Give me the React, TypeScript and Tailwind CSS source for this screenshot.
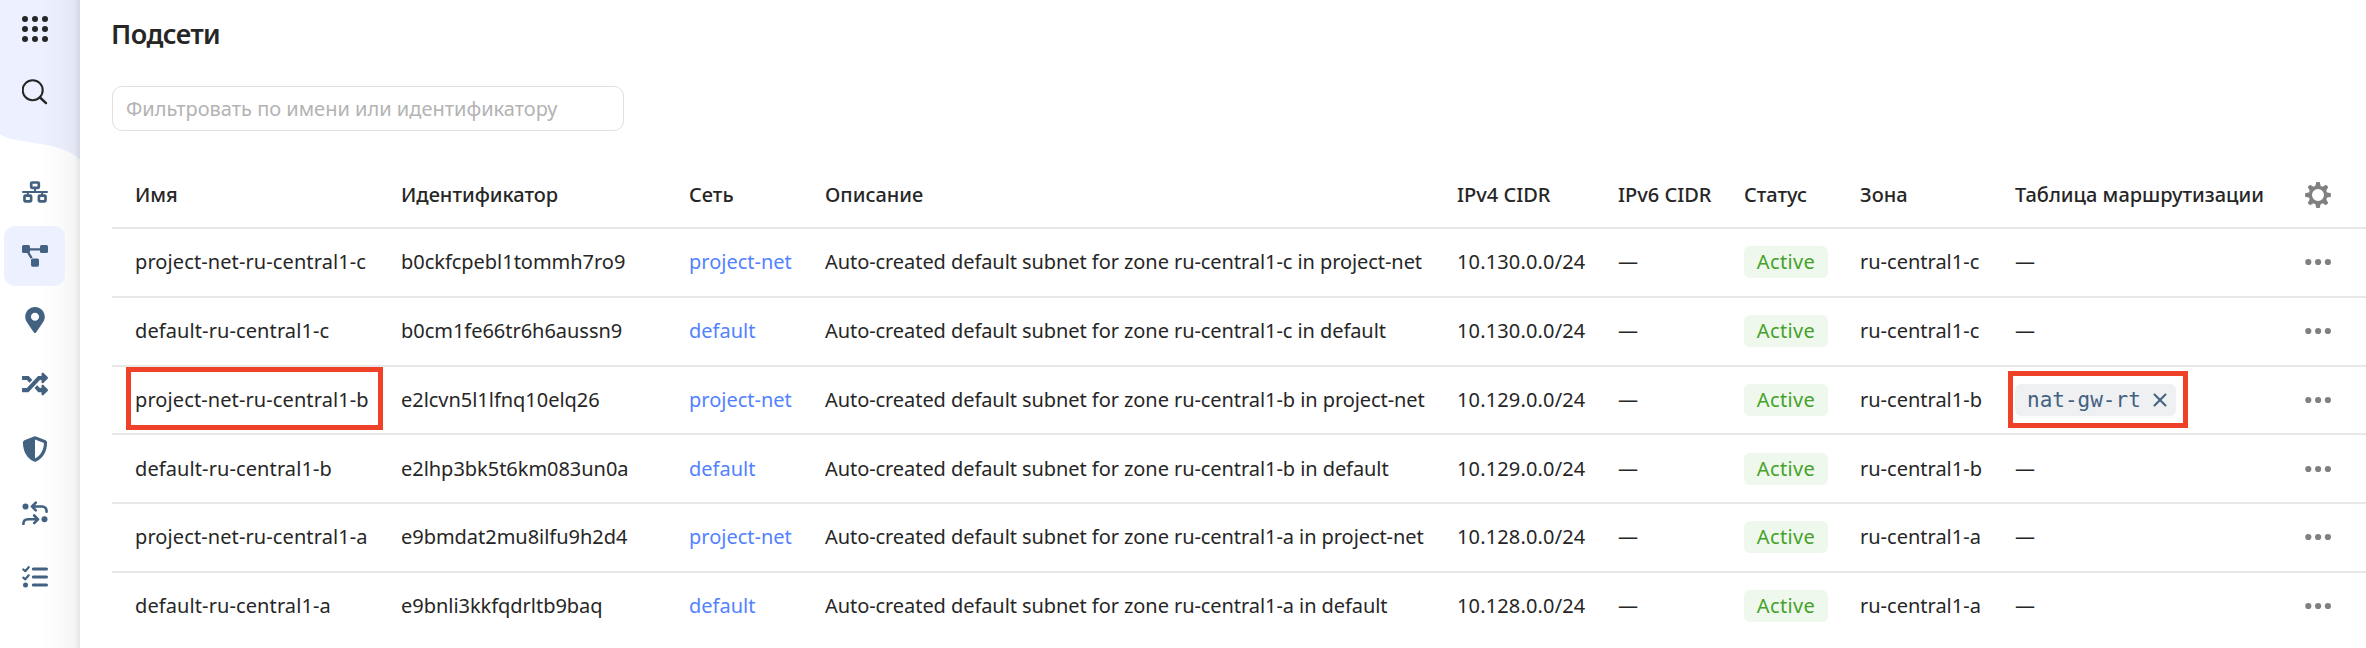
import type { ReactNode } from 'react';
import { FaMapMarkerAlt, FaRandom } from 'react-icons/fa';

type Subnet = {
  name: string;
  id: string;
  net: string;
  cidr: string;
  zone: string;
  routeTable?: string;
  marked?: boolean;
};

const SUBNETS: Subnet[] = [
  { name: 'project-net-ru-central1-c', id: 'b0ckfcpebl1tommh7ro9', net: 'project-net', cidr: '10.130.0.0/24', zone: 'ru-central1-c' },
  { name: 'default-ru-central1-c', id: 'b0cm1fe66tr6h6aussn9', net: 'default', cidr: '10.130.0.0/24', zone: 'ru-central1-c' },
  { name: 'project-net-ru-central1-b', id: 'e2lcvn5l1lfnq10elq26', net: 'project-net', cidr: '10.129.0.0/24', zone: 'ru-central1-b', routeTable: 'nat-gw-rt', marked: true },
  { name: 'default-ru-central1-b', id: 'e2lhp3bk5t6km083un0a', net: 'default', cidr: '10.129.0.0/24', zone: 'ru-central1-b' },
  { name: 'project-net-ru-central1-a', id: 'e9bmdat2mu8ilfu9h2d4', net: 'project-net', cidr: '10.128.0.0/24', zone: 'ru-central1-a' },
  { name: 'default-ru-central1-a', id: 'e9bnli3kkfqdrltb9baq', net: 'default', cidr: '10.128.0.0/24', zone: 'ru-central1-a' },
];

const HEADERS = ['Имя', 'Идентификатор', 'Сеть', 'Описание', 'IPv4 CIDR', 'IPv6 CIDR', 'Статус', 'Зона', 'Таблица маршрутизации'];

const COLUMNS = 'grid grid-cols-[266px_288px_136px_632px_161px_126px_116px_288px_1fr] items-center pl-[23px]';

function NavItem({ active, children }: { active?: boolean; children: ReactNode }) {
  return (
    <div className={`flex h-[60px] w-[61px] items-center justify-center rounded-[11px] text-[#436181] ${active ? 'bg-[#edf0fe]' : ''}`}>
      {children}
    </div>
  );
}

function AppsIcon() {
  return (
    <svg width="26" height="26" viewBox="0 0 26 26" fill="#262626">
      {[3, 13, 23].map((y) => [3, 13, 23].map((x) => <circle key={`${x}-${y}`} cx={x} cy={y} r="3" />))}
    </svg>
  );
}

function SearchIcon() {
  return (
    <svg width="26" height="26" viewBox="0 0 26 26" fill="none" stroke="#262626" strokeWidth="2.1" strokeLinecap="round">
      <circle cx="10.7" cy="11.2" r="10" />
      <path d="M18 18.5l6 5.6" strokeWidth="2.4" />
    </svg>
  );
}

function NetworkIcon() {
  return (
    <svg width="26" height="22" viewBox="0 0 26 22" fill="none" stroke="currentColor" strokeWidth="2.7">
      <rect x="9.2" y="1.5" width="7.6" height="5.4" rx="0.8" />
      <rect x="2.5" y="14.6" width="6.6" height="5.7" rx="0.8" />
      <rect x="16.9" y="14.6" width="6.6" height="5.7" rx="0.8" />
      <path d="M1 11h24" strokeWidth="2" strokeLinecap="round" />
      <path d="M13 8v3M5.8 11v3M20.2 11v3" strokeWidth="2" />
    </svg>
  );
}

function SubnetIcon() {
  return (
    <svg width="26" height="22" viewBox="0 0 26 22" fill="currentColor">
      <rect width="8" height="8" rx="1.6" />
      <rect x="18" width="8" height="8" rx="1.6" />
      <rect x="9" y="13.4" width="8" height="8.3" rx="1.6" />
      <path d="M8 4.3h10M6.2 7.5l3.4 5.6" fill="none" stroke="currentColor" strokeWidth="2.3" />
    </svg>
  );
}

function ShieldIcon() {
  return (
    <svg width="26" height="26" viewBox="0 0 26 26" fillRule="evenodd" fill="currentColor">
      <path d="M12 .5Q13 0 14 .5L23.6 4.3Q25.1 5 25.1 6.5C25 15.5 21 22.5 14 25.6Q13 26.1 12 25.6C5 22.5 1 15.5.9 6.5Q.9 5 2.4 4.3ZM13 3.5V22.5C18.5 19.8 21.8 14 22 7Z" />
    </svg>
  );
}

function RouteIcon() {
  return (
    <svg width="26" height="24" viewBox="0 0 26 24" fill="none" stroke="currentColor" strokeWidth="2.6" strokeLinecap="round" strokeLinejoin="round">
      <circle cx="3.5" cy="5.5" r="3" fill="currentColor" stroke="none" />
      <path d="M24.6 10.7C24.6 7.4 23 5.5 20 5.5H10M13.8 1.7L10 5.5l3.8 3.8" />
      <circle cx="22.5" cy="18.3" r="3" fill="currentColor" stroke="none" />
      <path d="M1.4 23C1.4 20 3 18.3 6 18.3H16M12.2 14.5l3.8 3.8-3.8 3.8" />
    </svg>
  );
}

function ChecklistIcon() {
  return (
    <svg width="26" height="22" viewBox="0 0 26 22" fill="none" stroke="currentColor" strokeWidth="2.2" strokeLinecap="round" strokeLinejoin="round">
      <path d="M11.3 2.9H24.5M11.3 11H24.5M11.3 19.1H24.5" strokeWidth="3" />
      <path d="M1.3 3.5l2 1.7L6.7 1.2M1.3 11.6l2 1.7L6.7 9.3" />
      <circle cx="3.5" cy="19.1" r="2.5" fill="currentColor" stroke="none" />
    </svg>
  );
}

function GearIcon() {
  return (
    <svg width="26" height="26" viewBox="-13 -13 26 26" fill="none" stroke="#808080">
      <circle r="7.7" strokeWidth="3.4" />
      {[0, 45, 90, 135, 180, 225, 270, 315].map((a) => (
        <path key={a} d="M-2.8-8.5L-1.7-12.9H1.7L2.8-8.5Z" fill="#808080" stroke="none" transform={`rotate(${a})`} />
      ))}
    </svg>
  );
}

function MoreIcon() {
  return (
    <svg width="26" height="8" viewBox="0 0 26 8" fill="#808080">
      <circle cx="3.3" cy="4" r="3.1" />
      <circle cx="13.1" cy="4" r="3.1" />
      <circle cx="22.9" cy="4" r="3.1" />
    </svg>
  );
}

function Sidebar() {
  return (
    <aside className="relative h-full w-[80px] shrink-0 overflow-hidden bg-white">
      <svg className="absolute top-0 left-0" width="80" height="162" viewBox="0 0 80 162">
        <path d="M0 0H80V159.5C70 151 60 147.5 46 145L14 139.5Q5 138 0 134Z" fill="#edf0fe" />
      </svg>
      <div className="absolute inset-y-0 right-0 w-[40px] bg-[linear-gradient(to_right,rgba(0,0,0,0)_0%,rgba(0,0,0,0.02)_55%,rgba(0,0,0,0.04)_85%,rgba(0,0,0,0.1)_100%)]" />
      <div className="relative flex flex-col pl-[22px] pt-[16px]">
        <AppsIcon />
        <div className="mt-[37px]">
          <SearchIcon />
        </div>
      </div>
      <nav className="relative flex flex-col gap-[4.15px] pl-[4px] pt-[57px]">
        <NavItem>
          <NetworkIcon />
        </NavItem>
        <NavItem active>
          <SubnetIcon />
        </NavItem>
        <NavItem>
          <FaMapMarkerAlt size={26} />
        </NavItem>
        <NavItem>
          <FaRandom size={26} />
        </NavItem>
        <NavItem>
          <ShieldIcon />
        </NavItem>
        <NavItem>
          <RouteIcon />
        </NavItem>
        <NavItem>
          <ChecklistIcon />
        </NavItem>
      </nav>
    </aside>
  );
}

function Row({ subnet }: { subnet: Subnet }) {
  return (
    <div className={`${COLUMNS} h-[68.75px] border-b-2 border-[#e8e8e8] last:border-transparent`}>
      <div className="relative tracking-[0.1px]">
        {subnet.name}
        {subnet.marked && <div className="absolute top-[-19px] left-[-9px] h-[63px] w-[257px] border-5 border-[#ee4128]" />}
      </div>
      <div className="tracking-[-0.03px]">{subnet.id}</div>
      <div className="text-[#5282ff]">{subnet.net}</div>
      <div className="tracking-[-0.07px]">
        Auto-created default subnet for zone {subnet.zone} in {subnet.net}
      </div>
      <div className="tracking-[0.15px]">{subnet.cidr}</div>
      <div>—</div>
      <div>
        <span className="flex h-[32px] w-[84px] items-center justify-center rounded-[6px] bg-[#eef8ed] tracking-[0.35px] text-[#46a229]">Active</span>
      </div>
      <div className="flex items-center">
        <div className="w-[155px] shrink-0">{subnet.zone}</div>
        {subnet.routeTable ? (
          <div className="relative flex h-[32px] w-[161px] shrink-0 items-center rounded-[6px] bg-[#eef0f2] pl-[12px] text-[#436181]">
            <span className="font-['DejaVu_Sans_Mono',monospace] text-[21px]">{subnet.routeTable}</span>
            <svg className="ml-[12px]" width="14" height="14" viewBox="0 0 14 14" stroke="currentColor" strokeWidth="2" strokeLinecap="round">
              <path d="M1.5 1.5L12.5 12.5M12.5 1.5L1.5 12.5" />
            </svg>
            <div className="absolute top-[-13px] left-[-7px] h-[57px] w-[180px] border-5 border-[#ee4128]" />
          </div>
        ) : (
          <div>—</div>
        )}
      </div>
      <div className="flex justify-end pr-[35px]">
        <MoreIcon />
      </div>
    </div>
  );
}

export default function App() {
  return (
    <div className="flex h-[648px] w-full overflow-hidden bg-white font-['Noto_Sans',sans-serif] text-[20px] leading-[28px] text-[#262626]">
      <Sidebar />
      <main className="min-w-0 flex-1 pl-[32px] pt-[16px] whitespace-nowrap">
        <h1 className="-ml-px text-[27px] leading-[36px] font-semibold tracking-[-0.55px]">Подсети</h1>
        <div className="mt-[34px] flex h-[45px] w-[512px] items-center rounded-[10px] border border-[#e0e0e0] pl-[13px] text-[#b3b3b3]">
          Фильтровать по имени или идентификатору
        </div>
        <div className={`${COLUMNS} mt-[30px] h-[68px] border-b-2 border-[#e8e8e8] pt-[2px] font-medium`}>
          {HEADERS.slice(0, 7).map((title) => (
            <div key={title}>{title}</div>
          ))}
          <div className="flex">
            <div className="w-[155px] shrink-0">{HEADERS[7]}</div>
            <div>{HEADERS[8]}</div>
          </div>
          <div className="flex justify-end pr-[35px]">
            <GearIcon />
          </div>
        </div>
        {SUBNETS.map((subnet) => (
          <Row key={subnet.id} subnet={subnet} />
        ))}
      </main>
    </div>
  );
}
